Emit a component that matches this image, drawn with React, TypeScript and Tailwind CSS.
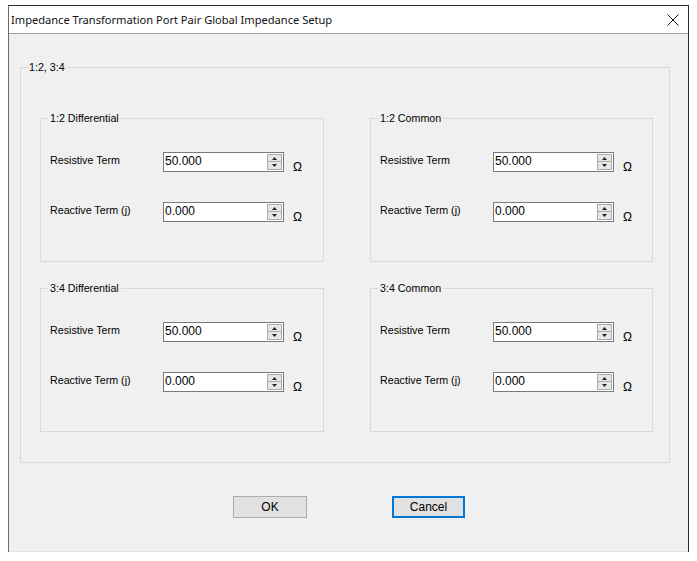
import React from "react";

function Spin({ value }: { value: string }) {
  return (
    <div className="relative w-[121px] h-[20px] bg-white border border-[#7a7a7a] flex items-start">
      <span className="pl-[1px] pt-[1px] text-[12px] leading-[14px] text-black">{value}</span>
      <div className="absolute right-[1px] top-[1px] w-[15px] h-[16px] flex flex-col gap-[0px]">
        <div className="h-[8px] bg-[#e6e6e6] border border-[#acacac] flex items-center justify-center">
          <svg width="5" height="3" viewBox="0 0 5 3"><path d="M2.5 0 L5 3 L0 3 Z" fill="#222" /></svg>
        </div>
        <div className="h-[8px] bg-[#e6e6e6] border border-[#acacac] border-t-0 flex items-center justify-center">
          <svg width="5" height="3" viewBox="0 0 5 3"><path d="M0 0 L5 0 L2.5 3 Z" fill="#222" /></svg>
        </div>
      </div>
    </div>
  );
}

function Row({ label, value, first }: { label: string; value: string; first?: boolean }) {
  return (
    <div className={`flex items-start ${first ? "mt-[33px]" : "mt-[29px]"}`}>
      <div className="w-[122px] pl-[9px] pt-[1px] text-[10.7px] leading-[14px] text-black">{label}</div>
      <Spin value={value} />
      <div className="ml-[9px] mt-[9px] text-[12px] leading-[12px] text-black">Ω</div>
    </div>
  );
}

function Group({ title }: { title: string }) {
  return (
    <div className="relative h-[144px] border border-[#d9d9d9] flex flex-col">
      <div className="absolute left-[7px] top-[-8px] px-[2px] bg-[#f0f0f0] text-[10.7px] leading-[14px] text-black">{title}</div>
      <Row first label="Resistive Term" value="50.000" />
      <Row label="Reactive Term (j)" value="0.000" />
    </div>
  );
}

export default function App() {
  return (
    <div className="w-[697px] h-[561px] bg-white overflow-hidden font-['Liberation_Sans',Arial,sans-serif]">
      <div className="ml-[8px] mt-[5px] w-[681px] h-[547px] border-t border-r border-t-[#2a2a2a] border-r-[#2a2a2a] border-l border-l-[#6a6a6a] bg-[#f0f0f0] flex flex-col">
        <div className="h-[28px] bg-white border-b border-[#a0a0a0] flex items-center justify-between pl-[2px] pr-[9px]">
          <span className="text-[11.1px] leading-[14px] text-[#111] font-['Noto_Sans','Liberation_Sans',sans-serif]">
            Impedance Transformation Port Pair Global Impedance Setup
          </span>
          <svg width="12" height="12" viewBox="0 0 12 12">
            <path d="M0.5 0.5 L11.5 11.5 M11.5 0.5 L0.5 11.5" stroke="#111" strokeWidth="1" />
          </svg>
        </div>
        <div className="flex-1 flex flex-col pl-[11px] border-b border-[#e4e4e4]">
          <div className="relative mt-[33px] w-[650px] h-[396px] border border-[#d9d9d9] pl-[19px] pt-[50px]">
            <div className="absolute left-[7px] top-[-8px] px-[1px] bg-[#f0f0f0] text-[10.7px] leading-[14px] text-black">1:2, 3:4</div>
            <div className="grid grid-cols-[284px_283px] gap-x-[46px] gap-y-[26px]">
              <Group title="1:2 Differential" />
              <Group title="1:2 Common" />
              <Group title="3:4 Differential" />
              <Group title="3:4 Common" />
            </div>
          </div>
          <div className="flex mt-[33px]">
            <button className="ml-[213px] w-[74px] h-[22px] bg-[#e1e1e1] border border-[#adadad] text-[12px] text-black">OK</button>
            <button className="ml-[85px] w-[73px] h-[22px] bg-[#e1e1e1] border-2 border-[#0078d7] text-[12px] text-black">Cancel</button>
          </div>
        </div>
      </div>
    </div>
  );
}
